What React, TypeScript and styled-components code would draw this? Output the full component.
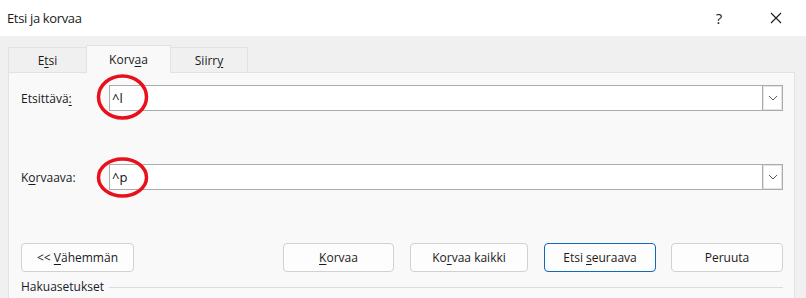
import React from 'react';
import styled, { createGlobalStyle } from 'styled-components';

const GlobalStyle = createGlobalStyle`
  html, body {
    margin: 0;
    padding: 0;
  }
  body {
    width: 806px;
    height: 298px;
    overflow: hidden;
    background: #f0f0f0;
    font-family: "Segoe UI", "Open Sans", "Noto Sans", sans-serif;
    font-size: 12px;
    color: #1a1a1a;
  }
`;

const Dialog = styled.div`
  width: 806px;
  height: 298px;
  display: flex;
  flex-direction: column;
  background: #f0f0f0;
  overflow: hidden;
`;

const TitleBar = styled.div`
  height: 36px;
  flex: none;
  background: #ffffff;
  display: flex;
  align-items: center;
  padding-left: 7px;
`;

const Title = styled.span`
  flex: 1;
  font-size: 13px;
  letter-spacing: -0.35px;
  color: #1a1a1a;
`;

const TitleControls = styled.div`
  display: flex;
  gap: 17px;
  margin-right: 10px;
`;

const TitleButton = styled.div`
  width: 40px;
  height: 36px;
  display: flex;
  align-items: center;
  justify-content: center;
  font-size: 15px;
  color: #1a1a1a;
`;

const Body = styled.div`
  flex: 1;
  display: flex;
  flex-direction: column;
  padding: 0 11px 0 8px;
`;

const TabRow = styled.div`
  height: 36px;
  flex: none;
  display: flex;
  align-items: flex-end;
`;

const Tab = styled.div<{ $width: number; $active?: boolean }>`
  box-sizing: border-box;
  width: ${(p) => p.$width}px;
  height: ${(p) => (p.$active ? 28 : 25)}px;
  margin-left: -1px;
  margin-bottom: ${(p) => (p.$active ? -1 : 0)}px;
  &:first-child {
    margin-left: 0;
  }
  position: relative;
  z-index: ${(p) => (p.$active ? 1 : 0)};
  border: 1px solid #e2e2e2;
  border-bottom: none;
  background: ${(p) => (p.$active ? '#f9f9f9' : '#f0f0f0')};
  display: flex;
  align-items: center;
  justify-content: center;
  padding-bottom: ${(p) => (p.$active ? 1 : 0)}px;
  color: #1a1a1a;
`;

const Panel = styled.div`
  flex: 1;
  background: #f9f9f9;
  border: 1px solid #e2e2e2;
  border-bottom: none;
  padding: 12px 11px 0 12px;
  display: flex;
  flex-direction: column;
`;

const FieldRow = styled.div`
  display: grid;
  grid-template-columns: 88px 1fr;
  align-items: center;
  height: 26px;
  & + & {
    margin-top: 53px;
  }
`;

const Label = styled.label`
  color: #1a1a1a;
`;

const Key = styled.span`
  text-decoration: underline;
  text-underline-offset: 2px;
`;

const ComboBox = styled.div`
  position: relative;
  box-sizing: border-box;
  height: 26px;
  background: #ffffff;
  border: 1px solid #ababab;
  display: flex;
  align-items: stretch;
`;

const ComboText = styled.span`
  flex: 1;
  display: flex;
  align-items: center;
  padding-left: 2px;
  font-size: 13px;
  color: #111;
`;

const DropButton = styled.div`
  box-sizing: border-box;
  width: 20px;
  border-left: 1px solid #ababab;
  box-shadow: inset 0 0 0 1px #e4e4e4;
  display: flex;
  align-items: center;
  justify-content: center;
`;

const Mark = styled.svg<{ $top: number; $h: number }>`
  position: absolute;
  left: -14px;
  top: ${(p) => p.$top}px;
  width: 53px;
  height: ${(p) => p.$h}px;
  pointer-events: none;
  overflow: visible;
`;

const ButtonRow = styled.div`
  margin-top: 53px;
  display: flex;
  align-items: center;
`;

const ButtonGroup = styled.div`
  margin-left: auto;
  display: flex;
  gap: 16px;
  & > :last-child {
    margin-left: -1px;
  }
`;

const Button = styled.div<{ $width: number; $primary?: boolean }>`
  box-sizing: border-box;
  width: ${(p) => p.$width}px;
  height: 29px;
  border: 1px solid ${(p) => (p.$primary ? '#0f6cbd' : '#d1d1d1')};
  border-radius: 4px;
  background: #fdfdfd;
  display: flex;
  align-items: center;
  justify-content: center;
  color: #1a1a1a;
`;

const SectionRow = styled.div`
  margin-top: 6px;
  display: flex;
  align-items: center;
  gap: 5px;
`;

const SectionTitle = styled.span`
  color: #1a1a2a;
`;

const SectionLine = styled.div`
  flex: 1;
  height: 1px;
  background: #dcdcdc;
  margin-top: 1px;
`;

function Chevron() {
  return (
    <svg width="10" height="6" viewBox="0 0 10 6">
      <polyline points="1,1 5,5 9,1" fill="none" stroke="#5a5a5a" strokeWidth="1" />
    </svg>
  );
}

function CloseIcon() {
  return (
    <svg width="12" height="12" viewBox="0 0 12 12">
      <path d="M1 1 L11 11 M11 1 L1 11" stroke="#1a1a1a" strokeWidth="1.1" />
    </svg>
  );
}

function RedMark({ top, h }: { top: number; h: number }) {
  return (
    <Mark $top={top} $h={h} viewBox={`0 0 53 ${h}`}>
      <ellipse cx="26.5" cy={h / 2} rx="24" ry={h / 2 - 2} fill="none" stroke="#e8101a" strokeWidth="3.5" />
    </Mark>
  );
}

export default function App() {
  return (
    <Dialog>
      <GlobalStyle />
      <TitleBar>
        <Title>Etsi ja korvaa</Title>
        <TitleControls>
          <TitleButton>?</TitleButton>
          <TitleButton>
            <CloseIcon />
          </TitleButton>
        </TitleControls>
      </TitleBar>
      <Body>
        <TabRow>
          <Tab $width={79}>
            E<Key>t</Key>si
          </Tab>
          <Tab $width={85} $active>
            Korv<Key>a</Key>a
          </Tab>
          <Tab $width={78}>
            Siirr<Key>y</Key>
          </Tab>
        </TabRow>
        <Panel>
          <FieldRow>
            <Label>
              Etsittävä<Key>:</Key>
            </Label>
            <ComboBox>
              <ComboText>^l</ComboText>
              <DropButton>
                <Chevron />
              </DropButton>
              <RedMark top={-12} h={46} />
            </ComboBox>
          </FieldRow>
          <FieldRow>
            <Label>
              K<Key>o</Key>rvaava:
            </Label>
            <ComboBox>
              <ComboText>^p</ComboText>
              <DropButton>
                <Chevron />
              </DropButton>
              <RedMark top={-8} h={41} />
            </ComboBox>
          </FieldRow>
          <ButtonRow>
            <Button $width={113}>
              &lt;&lt;&nbsp;<Key>V</Key>ähemmän
            </Button>
            <ButtonGroup>
              <Button $width={111}>
                <Key>K</Key>orvaa
              </Button>
              <Button $width={118}>
                Ko<Key>r</Key>vaa kaikki
              </Button>
              <Button $width={112} $primary>
                Etsi&nbsp;<Key>s</Key>euraava
              </Button>
              <Button $width={112}>Peruuta</Button>
            </ButtonGroup>
          </ButtonRow>
          <SectionRow>
            <SectionTitle>Hakuasetukset</SectionTitle>
            <SectionLine />
          </SectionRow>
        </Panel>
      </Body>
    </Dialog>
  );
}
